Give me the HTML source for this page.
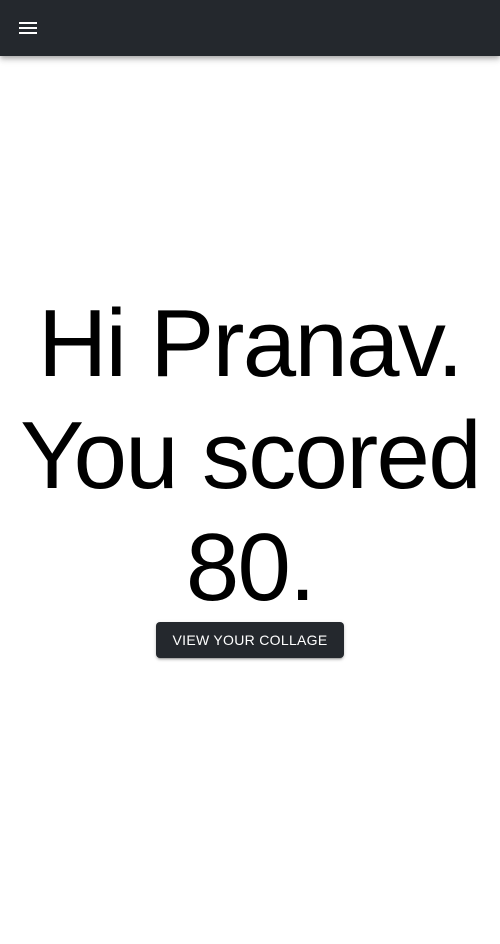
<!DOCTYPE html>
<html><head><style>
body{margin:0;width:500px;height:944px;background:#fff;font-family:"Liberation Sans",sans-serif;overflow:hidden;position:relative}
.bar{position:absolute;top:0;left:0;width:500px;height:56px;background:#24282d;box-shadow:0 2px 4px -1px rgba(0,0,0,.2),0 4px 5px 0 rgba(0,0,0,.14),0 1px 10px 0 rgba(0,0,0,.12)}
.ham{position:absolute;left:19px;top:22px;width:18px;height:2px;background:#fff;box-shadow:0 5px 0 #fff,0 10px 0 #fff}
h1{position:absolute;top:288px;left:0;width:500px;margin:0;text-align:center;font-weight:400;font-size:96px;line-height:112px;color:#000;letter-spacing:-1.7px}
.btn{position:absolute;left:156px;top:622px;width:188px;height:36px;background:#24282d;color:#fff;border-radius:4px;font-size:14px;line-height:36px;text-align:center;letter-spacing:.3px;box-shadow:0 3px 1px -2px rgba(0,0,0,.2),0 2px 2px 0 rgba(0,0,0,.14),0 1px 5px 0 rgba(0,0,0,.12)}
</style></head><body>
<div class="bar"><div class="ham"></div></div>
<h1>Hi Pranav.<br>You scored<br>80.</h1>
<div class="btn">VIEW YOUR COLLAGE</div>
</body></html>
